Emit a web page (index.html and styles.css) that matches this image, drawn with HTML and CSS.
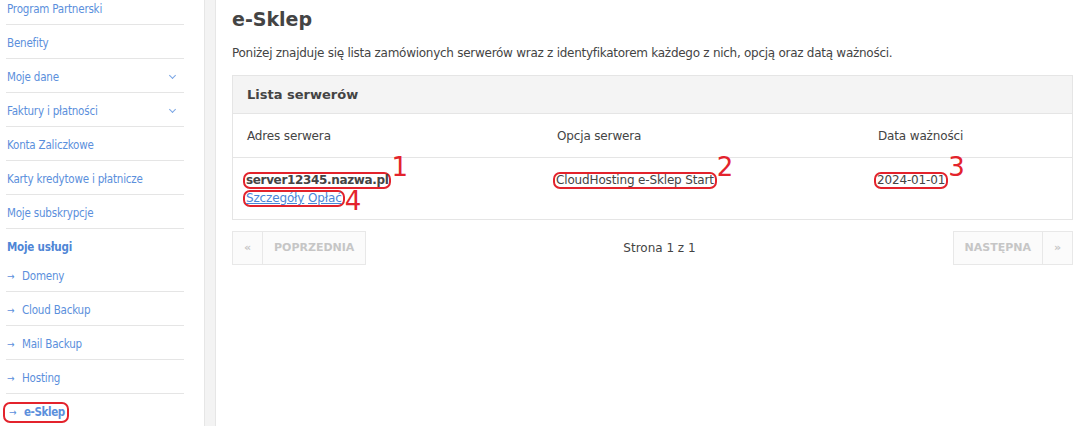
FILE: index.html
```html
<!DOCTYPE html>
<html lang="pl">
  <head>
    <meta charset="UTF-8" />
    <meta name="viewport" content="width=device-width, initial-scale=1.0" />
    <title>e-Sklep</title>
    <link rel="stylesheet" href="styles.css">
  </head>
  <body>
    <div id="page">
      <div id="sidebar">
        <ul class="menu">
          <li><a href="#">Program Partnerski</a></li>
          <li><a href="#">Benefity</a></li>
          <li><a href="#">Moje dane</a><span class="chev"></span></li>
          <li><a href="#">Faktury i płatności</a><span class="chev"></span></li>
          <li><a href="#">Konta Zaliczkowe</a></li>
          <li><a href="#">Karty kredytowe i płatnicze</a></li>
          <li><a href="#">Moje subskrypcje</a></li>
          <li class="group">Moje usługi</li>
          <li class="sub"><a href="#">Domeny</a></li>
          <li class="sub"><a href="#">Cloud Backup</a></li>
          <li class="sub"><a href="#">Mail Backup</a></li>
          <li class="sub"><a href="#">Hosting</a></li>
          <li class="sub active"><a href="#" class="mark">e-Sklep</a></li>
        </ul>
      </div>

      <div id="gutter"></div>

      <div id="main">
        <h1>e-Sklep</h1>
        <p class="lead">Poniżej znajduje się lista zamówionych serwerów wraz z identyfikatorem każdego z nich, opcją oraz datą ważności.</p>

        <div class="panel">
          <div class="panel-head">Lista serwerów</div>
          <div class="row head">
            <div>Adres serwera</div>
            <div>Opcja serwera</div>
            <div>Data ważności</div>
          </div>
          <div class="row data">
            <div>
              <div><b class="mark host">server12345.nazwa.pl</b><span class="num n1">1</span></div>
              <div class="links"><span class="mark"><a href="#">Szczegóły</a> <a href="#">Opłać</a></span><span class="num n4">4</span></div>
            </div>
            <div><span class="mark">CloudHosting e-Sklep Start</span><span class="num n2">2</span></div>
            <div><span class="mark">2024-01-01</span><span class="num n3">3</span></div>
          </div>
        </div>

        <div class="pager">
          <div class="btns">
            <span class="btn arrow">&laquo;</span>
            <span class="btn">POPRZEDNIA</span>
          </div>
          <div class="info">Strona 1 z 1</div>
          <div class="btns">
            <span class="btn">NASTĘPNA</span>
            <span class="btn arrow">&raquo;</span>
          </div>
        </div>
      </div>
    </div>
  </body>
</html>
```

FILE: styles.css
```css
* {
  box-sizing: border-box;
  margin: 0;
  padding: 0;
}

body {
  background-color: white;
  color: #444;
  font-family: "DejaVu Sans", Verdana, sans-serif;
  font-size: 12px;
  overflow: hidden;
}

a {
  color: inherit;
  text-decoration: none;
}

#page {
  display: flex;
  height: 426px;
}

/* sidebar */

#sidebar {
  width: 204px;
  padding-left: 6px;
}

.menu {
  list-style: none;
  width: 178px;
  margin-top: -9px;
}

.menu li {
  display: flex;
  align-items: center;
  justify-content: space-between;
  height: 34px;
  padding: 2px 0 0 1px;
  border-bottom: 1px solid #e5e5e5;
  color: #5b8fdc;
  font-family: "DejaVu Sans Condensed", "DejaVu Sans", sans-serif;
  font-size: 11.5px;
  letter-spacing: -0.2px;
}

.menu li.group {
  height: 29px;
  padding-top: 6px;
  border-bottom: none;
  font-weight: bold;
  color: #4f86d6;
}

.menu li.sub {
  justify-content: flex-start;
}

.menu li.sub a::before {
  content: "\2192";
  display: inline-block;
  width: 15px;
  font-size: 10px;
  font-weight: normal;
}

.menu li.active {
  border-bottom: none;
  font-weight: bold;
}

.chev {
  width: 5px;
  height: 5px;
  margin: 0 9px 2px 0;
  border-right: 1px solid #7aa6e4;
  border-bottom: 1px solid #7aa6e4;
  transform: rotate(45deg);
}

#gutter {
  width: 12px;
  background-color: #f3f3f3;
  border-left: 1px solid #e6e6e6;
  border-right: 1px solid #e6e6e6;
}

/* main */

#main {
  flex: 1;
  padding: 0 3px 0 16px;
}

h1 {
  font-size: 19px;
  color: #444;
  padding-top: 8px;
  height: 46px;
}

.lead {
  height: 29px;
  color: #444;
  letter-spacing: -0.27px;
}

.panel {
  border: 1px solid #e5e5e5;
}

.panel-head {
  height: 38px;
  padding: 11px 14px;
  background-color: #f4f4f4;
  border-bottom: 1px solid #e5e5e5;
  font-size: 13px;
  font-weight: bold;
}

.row {
  display: grid;
  grid-template-columns: 310px 321px 1fr;
  padding: 0 14px;
  letter-spacing: -0.15px;
}

.row.head {
  height: 44px;
  align-items: center;
  border-bottom: 1px solid #e5e5e5;
}

.row.data {
  height: 61px;
  padding-top: 14px;
}

.row.data > div {
  margin-left: -4px;
}

.links {
  margin-top: 1px;
}

.links a {
  color: #4a86d8;
  text-decoration: underline;
}

.mark {
  display: inline-block;
  border: 2px solid #e3232c;
  border-radius: 7px;
  padding: 0 1px;
  line-height: 13px;
}

.host {
  letter-spacing: -0.35px;
}

.num {
  position: relative;
  color: #e3232c;
  font-size: 26px;
  line-height: 0;
  letter-spacing: 0;
}

.n1, .n2, .n3 {
  top: -8px;
}

.n4 {
  top: 8px;
}

.menu .mark {
  margin-left: -4px;
  padding: 1px 2px 1px 4px;
  line-height: 15px;
  font-size: 11.5px;
  letter-spacing: -0.4px;
}

/* pager */

.pager {
  display: flex;
  justify-content: space-between;
  align-items: center;
  margin-top: 11px;
}

.btns {
  display: flex;
}

.btn {
  height: 34px;
  padding: 0 11px;
  line-height: 32px;
  border: 1px solid #e8e8e8;
  background-color: #fbfbfb;
  color: #c6c6c6;
  font-size: 11px;
  font-weight: bold;
}

.btns .btn + .btn {
  border-left: none;
}

.btn.arrow {
  width: 30px;
  padding: 0;
  text-align: center;
}

.btns:first-child .btn.arrow {
  width: 31px;
}
```
